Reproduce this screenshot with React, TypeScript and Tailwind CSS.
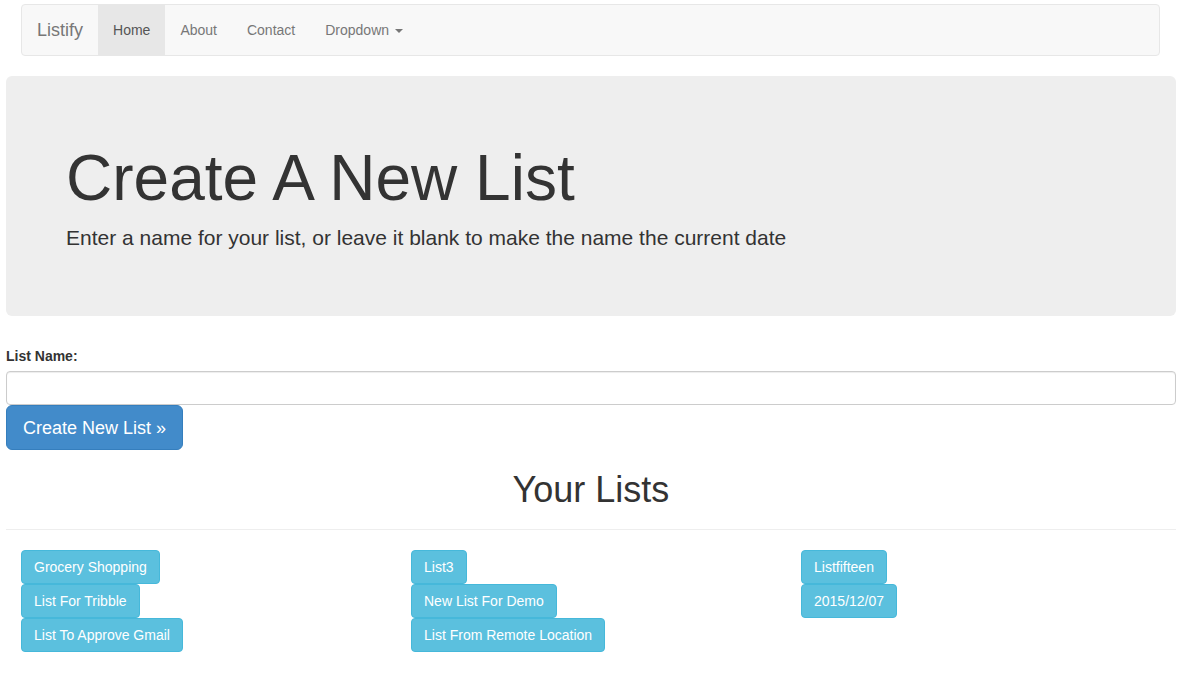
const lists = [
  ['Grocery Shopping', 'List For Tribble', 'List To Approve Gmail'],
  ['List3', 'New List For Demo', 'List From Remote Location'],
  ['Listfifteen', '2015/12/07'],
];

const navLinks = ['Home', 'About', 'Contact'];

export default function App() {
  return (
    <div className="min-h-screen w-[1182px] bg-white font-['Liberation_Sans',_Arial,_sans-serif] text-[14px] text-[#333] leading-[20px]">
      <div className="pl-[21px] pr-[22px] pt-[4px]">
        <nav className="flex h-[52px] items-stretch rounded-[4px] border border-[#e7e7e7] bg-[#f8f8f8]">
          <a className="flex items-center px-[15px] text-[18px] text-[#777]">Listify</a>
          {navLinks.map((l, i) => (
            <a
              key={l}
              className={`flex items-center px-[15px] ${i === 0 ? 'bg-[#e7e7e7] text-[#555]' : 'text-[#777]'}`}
            >
              {l}
            </a>
          ))}
          <a className="flex items-center px-[15px] text-[#777]">
            Dropdown
            <span className="ml-[6px] mt-[2px] h-0 w-0 border-x-[4px] border-t-[4px] border-x-transparent border-t-[#777]"></span>
          </a>
        </nav>
      </div>

      <div className="px-[6px] pt-[20px]">
        <div className="rounded-[6px] bg-[#eee] px-[60px] pb-[49px] pt-[68px]">
          <h1 className="text-[64px] leading-[69px] text-[#333]">Create A New List</h1>
          <p className="mt-[10px] mb-[15px] text-[21px] leading-[29px]">
            Enter a name for your list, or leave it blank to make the name the current date
          </p>
        </div>

        <form className="mt-[30px]">
          <label className="block font-bold mb-[5px]">List Name:</label>
          <input
            type="text"
            className="block h-[34px] w-full rounded-[4px] border border-[#ccc] bg-white px-3 shadow-[inset_0_1px_1px_rgba(0,0,0,0.075)] outline-none"
          />
          <button
            type="button"
            className="h-[45px] rounded-[6px] border border-[#357ebd] bg-[#428bca] px-[16px] text-[18px] leading-[24px] text-white"
          >
            Create New List »
          </button>
        </form>

        <h1 className="mt-[20px] text-center text-[36px] leading-[40px] text-[#333]">Your Lists</h1>
        <hr className="mt-[19px] border-t border-[#eee]" />

        <div className="mt-[20px] grid grid-cols-3">
          {lists.map((col, ci) => (
            <div key={ci} className="flex flex-col items-start px-[15px]">
              {col.map((name) => (
                <button
                  key={name}
                  type="button"
                  className="h-[34px] rounded-[4px] border border-[#46b8da] bg-[#5bc0de] px-[12px] text-[14px] leading-[20px] text-white"
                >
                  {name}
                </button>
              ))}
            </div>
          ))}
        </div>
      </div>
    </div>
  );
}
